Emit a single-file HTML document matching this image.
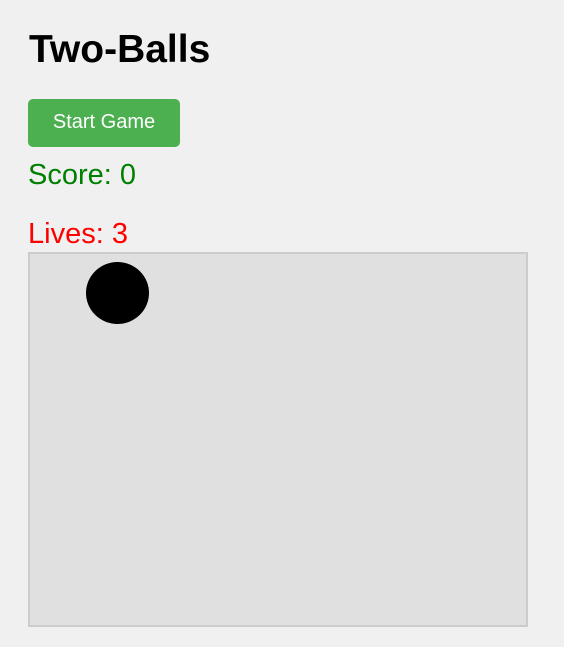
<!DOCTYPE html>
<html><head><style>
body{margin:0;background:#f0f0f0;font-family:"Liberation Sans",Arial,sans-serif;width:564px;height:647px;overflow:hidden;position:relative}
.a{position:absolute;white-space:nowrap}
h1{position:absolute;left:29px;top:28px;margin:0;font-size:39px;line-height:44px;font-weight:bold;color:#000}
.btn{left:28px;top:99px;width:152px;height:48px;background:#4caf50;border-radius:5px;color:#fff;font-size:20px;line-height:46px;text-align:center}
.s{left:28px;top:158px;font-size:29px;line-height:34px;color:#008000}
.l{left:28px;top:217px;font-size:29px;line-height:34px;color:#ff0000}
.c{left:28px;top:252px;width:496px;height:371px;background:#e0e0e0;border:2px solid #ccc}
.b{left:86px;top:262px;width:63px;height:62px;border-radius:50%;background:#000}
</style></head><body>
<h1>Two-Balls</h1>
<div class="a btn">Start Game</div>
<div class="a s">Score: 0</div>
<div class="a l">Lives: 3</div>
<div class="a c"></div>
<div class="a b"></div>
</body></html>
